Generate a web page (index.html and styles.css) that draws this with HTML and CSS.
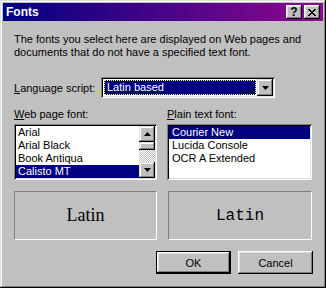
FILE: index.html
```html
<!DOCTYPE html>
<html lang="en">
<head>
	<meta charset="UTF-8">
	<title>Fonts</title>
	<link rel="stylesheet" href="styles.css">
</head>
<body>
	<div class="window">
		<div class="titlebar">
			<span class="title">Fonts</span>
			<div class="title-btns">
				<div class="tbtn help">?</div>
				<div class="tbtn close">
					<svg width="8" height="7" viewBox="0 0 8 7">
						<path d="M0 0h2v1h1v1h2v-1h1v-1h2v1h-1v1h-1v1h-1v1h1v1h1v1h1v1h-2v-1h-1v-1h-2v1h-1v1h-2v-1h1v-1h1v-1h1v-1h-1v-1h-1v-1h-1z" fill="#000"/>
					</svg>
				</div>
			</div>
		</div>
		<div class="content">
			<p class="intro">The fonts you select here are displayed on Web pages and<br>documents that do not have a specified text font.</p>

			<div class="lang-row">
				<span class="lang-label"><u>L</u>anguage script:</span>
				<div class="combo">
					<div class="combo-value"><span>Latin based</span></div>
					<div class="combo-btn">
						<svg width="7" height="4" viewBox="0 0 7 4"><polygon points="0,0 7,0 3.5,4" fill="#000"/></svg>
					</div>
				</div>
			</div>

			<div class="fonts">
				<div class="col">
					<div class="label"><u>W</u>eb page font:</div>
					<div class="listbox">
						<ul class="items">
							<li>Arial</li>
							<li>Arial Black</li>
							<li>Book Antiqua</li>
							<li class="sel">Calisto MT</li>
						</ul>
						<div class="scrollbar">
							<div class="sb-btn">
								<svg width="7" height="4" viewBox="0 0 7 4"><polygon points="3.5,0 7,4 0,4" fill="#000"/></svg>
							</div>
							<div class="sb-thumb"></div>
							<div class="sb-track"></div>
							<div class="sb-btn">
								<svg width="7" height="4" viewBox="0 0 7 4"><polygon points="0,0 7,0 3.5,4" fill="#000"/></svg>
							</div>
						</div>
					</div>
				</div>
				<div class="col">
					<div class="label"><u>P</u>lain text font:</div>
					<div class="listbox">
						<ul class="items plain">
							<li class="sel">Courier New</li>
							<li>Lucida Console</li>
							<li>OCR A Extended</li>
						</ul>
					</div>
				</div>
			</div>

			<div class="previews">
				<div class="preview serif">Latin</div>
				<div class="preview mono">Latin</div>
			</div>

			<div class="buttons">
				<div class="btn default">OK</div>
				<div class="btn">Cancel</div>
			</div>
		</div>
	</div>
</body>
</html>
```

FILE: styles.css
```css
*{
	margin: 0;
	padding: 0;
	box-sizing: border-box;
}
body{
	width: 326px;
	height: 288px;
	font-family: "Liberation Sans", Arial, sans-serif;
	font-size: 11px;
	color: #000;
	background: #c0c0c0;
}
.window{
	width: 326px;
	height: 288px;
	padding: 3px;
	background: #c0c0c0;
	box-shadow: inset -1px -1px #000, inset 1px 1px #dfdfdf, inset -2px -2px #808080, inset 2px 2px #fff;
}
/* title bar */
.titlebar{
	height: 18px;
	display: flex;
	align-items: center;
	justify-content: space-between;
	padding: 0 3px 0 3px;
	background: linear-gradient(to right, #000080, #900890);
}
.title{
	color: #fff;
	font-weight: bold;
	font-size: 12px;
}
.title-btns{
	display: flex;
	gap: 2px;
}
.tbtn{
	width: 16px;
	height: 14px;
	background: #c0c0c0;
	box-shadow: inset -1px -1px #000, inset 1px 1px #fff, inset -2px -2px #808080, inset 2px 2px #dfdfdf;
	display: flex;
	align-items: center;
	justify-content: center;
}
.help{
	font-weight: bold;
	font-size: 12px;
	line-height: 14px;
}
/* body */
.content{
	padding: 12px 10px 0 11px;
}
.intro{
	line-height: 13px;
}
.lang-row{
	margin-top: 18px;
	height: 21px;
	display: flex;
	align-items: center;
}
.lang-label{
	width: 87px;
}
.combo{
	width: 174px;
	height: 21px;
	background: #fff;
	padding: 2px;
	display: flex;
	box-shadow: inset 1px 1px #808080, inset -1px -1px #fff, inset 2px 2px #000, inset -2px -2px #dfdfdf;
}
.combo-value{
	flex: 1;
	padding: 1px;
}
.combo-value span{
	display: block;
	height: 15px;
	line-height: 13px;
	padding-left: 2px;
	background: #000080;
	color: #fff;
	border: 1px dotted #ffff80;
}
.combo-btn{
	width: 16px;
	height: 17px;
	background: #c0c0c0;
	box-shadow: inset -1px -1px #000, inset 1px 1px #dfdfdf, inset -2px -2px #808080, inset 2px 2px #fff;
	display: flex;
	align-items: center;
	justify-content: center;
}
/* font lists */
.fonts{
	display: grid;
	grid-template-columns: 143px 145px;
	column-gap: 10px;
	margin-top: 10px;
}
.label{
	line-height: 13px;
	margin-bottom: 3px;
}
.listbox{
	height: 56px;
	padding: 2px;
	background: #fff;
	display: flex;
	box-shadow: inset 1px 1px #808080, inset -1px -1px #fff, inset 2px 2px #000, inset -2px -2px #dfdfdf;
}
.items{
	flex: 1;
	list-style: none;
}
.items li{
	height: 13px;
	line-height: 13px;
	padding-left: 2px;
	white-space: nowrap;
}
.items.plain li{
	padding-left: 3px;
}
.items li.sel{
	background: #000080;
	color: #fff;
}
.scrollbar{
	width: 16px;
	display: flex;
	flex-direction: column;
}
.sb-btn{
	height: 16px;
	background: #c0c0c0;
	box-shadow: inset -1px -1px #000, inset 1px 1px #dfdfdf, inset -2px -2px #808080, inset 2px 2px #fff;
	display: flex;
	align-items: center;
	justify-content: center;
}
.sb-thumb{
	height: 8px;
	background: #c0c0c0;
	box-shadow: inset -1px -1px #000, inset 1px 1px #dfdfdf, inset -2px -2px #808080, inset 2px 2px #fff;
}
.sb-track{
	flex: 1;
	background-image: repeating-conic-gradient(#fff 0 25%, #c0c0c0 0 50%);
	background-size: 2px 2px;
}
/* previews */
.previews{
	display: grid;
	grid-template-columns: 143px 144px;
	column-gap: 11px;
	margin-top: 11px;
}
.preview{
	height: 49px;
	border: 1px solid;
	border-color: #808080 #fff #fff #808080;
	display: flex;
	align-items: center;
	justify-content: center;
}
.serif{
	font-family: "Liberation Serif", "Times New Roman", serif;
	font-size: 18px;
}
.mono{
	font-family: "Liberation Mono", "Courier New", monospace;
	font-size: 16px;
}
/* buttons */
.buttons{
	display: flex;
	justify-content: flex-end;
	gap: 7px;
	margin-top: 11px;
}
.btn{
	width: 75px;
	height: 23px;
	display: flex;
	align-items: center;
	justify-content: center;
	background: #c0c0c0;
	box-shadow: inset -1px -1px #000, inset 1px 1px #fff, inset -2px -2px #808080, inset 2px 2px #dfdfdf;
}
.btn.default{
	border: 1px solid #000;
	box-shadow: inset -1px -1px #000, inset 1px 1px #fff, inset -2px -2px #808080, inset 2px 2px #dfdfdf;
}
```
